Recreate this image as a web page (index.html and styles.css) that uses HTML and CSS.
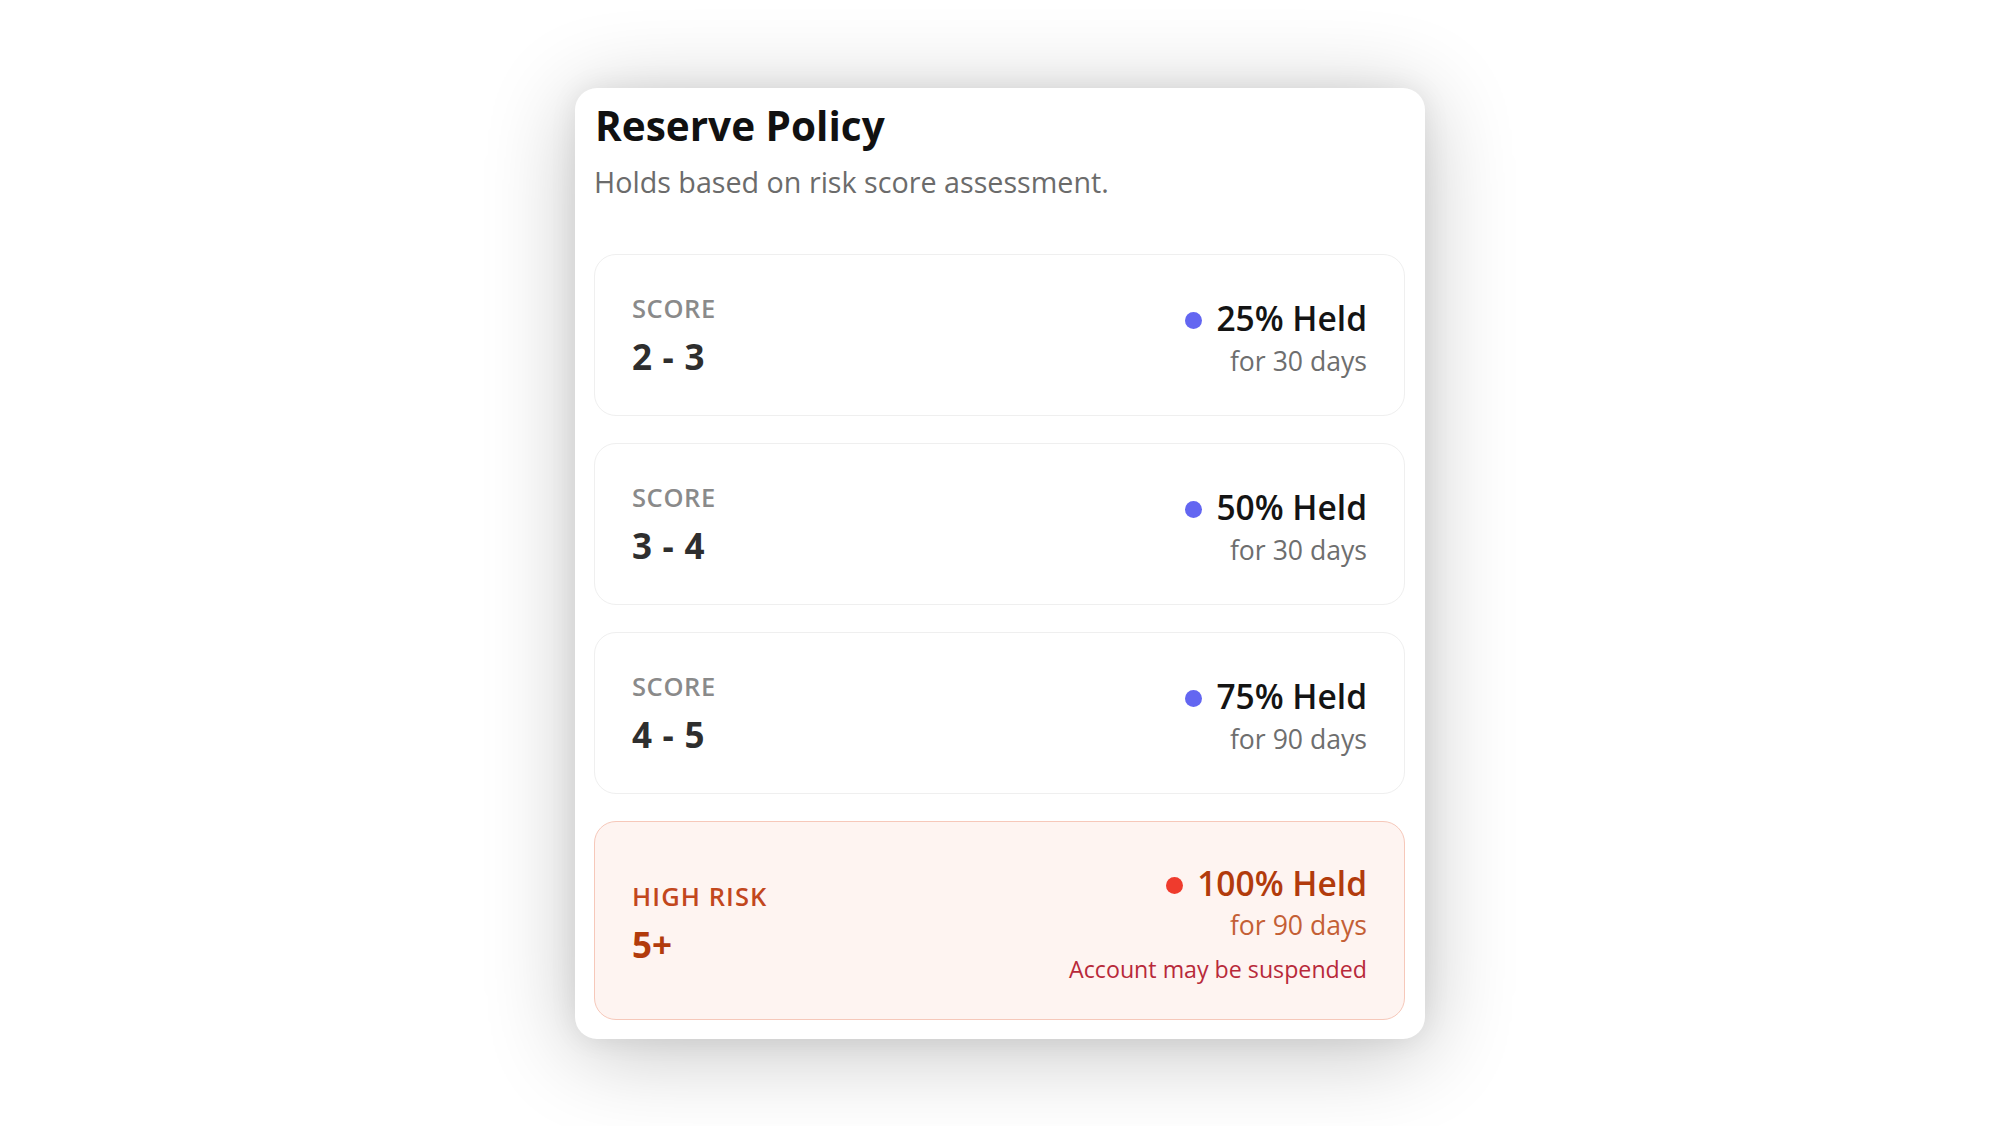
FILE: index.html
```html
<!DOCTYPE html>
<html lang="en">
<head>
<meta charset="utf-8">
<title>Reserve Policy</title>
<link rel="stylesheet" href="styles.css">
</head>
<body>
<section class="card">
  <h1 class="title">Reserve Policy</h1>
  <p class="subtitle">Holds based on risk score assessment.</p>
  <div class="tiers">
    <div class="tier">
      <div class="tier-left">
        <div class="tier-label">SCORE</div>
        <div class="tier-value">2 - 3</div>
      </div>
      <div class="tier-right">
        <div class="held"><span class="dot"></span>25% Held</div>
        <div class="days">for 30 days</div>
      </div>
    </div>
    <div class="tier">
      <div class="tier-left">
        <div class="tier-label">SCORE</div>
        <div class="tier-value">3 - 4</div>
      </div>
      <div class="tier-right">
        <div class="held"><span class="dot"></span>50% Held</div>
        <div class="days">for 30 days</div>
      </div>
    </div>
    <div class="tier">
      <div class="tier-left">
        <div class="tier-label">SCORE</div>
        <div class="tier-value">4 - 5</div>
      </div>
      <div class="tier-right">
        <div class="held"><span class="dot"></span>75% Held</div>
        <div class="days">for 90 days</div>
      </div>
    </div>
    <div class="tier tier-danger">
      <div class="tier-left">
        <div class="tier-label">HIGH RISK</div>
        <div class="tier-value">5+</div>
      </div>
      <div class="tier-right">
        <div class="held"><span class="dot"></span>100% Held</div>
        <div class="days">for 90 days</div>
        <div class="warning">Account may be suspended</div>
      </div>
    </div>
  </div>
</section>
</body>
</html>
```

FILE: styles.css
```css
* { box-sizing: border-box; }

html, body {
  margin: 0;
  padding: 0;
  background: #ffffff;
}

body {
  min-height: 100vh;
  display: flex;
  align-items: center;
  justify-content: center;
  font-family: "Open Sans", "Noto Sans", sans-serif;
}

.card {
  width: 850px;
  background: #ffffff;
  border-radius: 22px;
  padding: 14px 20px 19px 19px;
  box-shadow: 0 12px 90px rgba(0, 0, 0, 0.24), 0 0 28px rgba(0, 0, 0, 0.07);
}

.title {
  margin: 0;
  font-size: 40.5px;
  line-height: 48px;
  font-weight: 700;
  color: #111111;
  padding-left: 1px;
}

.subtitle {
  margin: 14px 0 0;
  font-size: 28.7px;
  line-height: 36px;
  color: #6b6b6b;
}

.tiers {
  margin-top: 54px;
  display: flex;
  flex-direction: column;
  gap: 27px;
}

.tier {
  display: flex;
  justify-content: space-between;
  align-items: center;
  padding: 37px 37px 36px;
  border: 1px solid #efefef;
  border-radius: 22px;
  background: #ffffff;
}

.tier-left {
  display: flex;
  flex-direction: column;
}

.tier-label {
  font-size: 25.5px;
  line-height: 32px;
  font-weight: 600;
  letter-spacing: 0.6px;
  color: #8a8a8a;
}

.tier-value {
  margin-top: 11px;
  font-size: 35px;
  line-height: 44px;
  font-weight: 700;
  word-spacing: 1.5px;
  color: #2e2e2e;
}

.tier-right {
  display: flex;
  flex-direction: column;
  align-items: flex-end;
  padding-top: 5px;
}

.held {
  display: flex;
  align-items: center;
  gap: 14px;
  font-size: 33.5px;
  line-height: 40px;
  font-weight: 600;
  color: #141414;
}

.dot {
  width: 17px;
  height: 17px;
  border-radius: 50%;
  background: #6366f1;
  margin-top: 6px;
}

.days {
  margin-top: 6px;
  font-size: 26.6px;
  line-height: 34px;
  color: #6e6e6e;
}

.tier-danger {
  padding-top: 41px;
  padding-bottom: 35px;
  background: #fef4f1;
  border-color: #f6c8ba;
}

.tier-danger .tier-right { padding-top: 0; }
.tier-danger .tier-label { color: #c2471d; letter-spacing: 1.1px; }
.tier-danger .tier-value { color: #b23b0c; }
.tier-danger .held { color: #b23b0c; }
.tier-danger .dot { background: #ef3b2d; }
.tier-danger .days { margin-top: 5px; color: #c45f35; }

.warning {
  margin-top: 12px;
  font-size: 23.2px;
  line-height: 30px;
  font-weight: 500;
  color: #b8293a;
}
```
